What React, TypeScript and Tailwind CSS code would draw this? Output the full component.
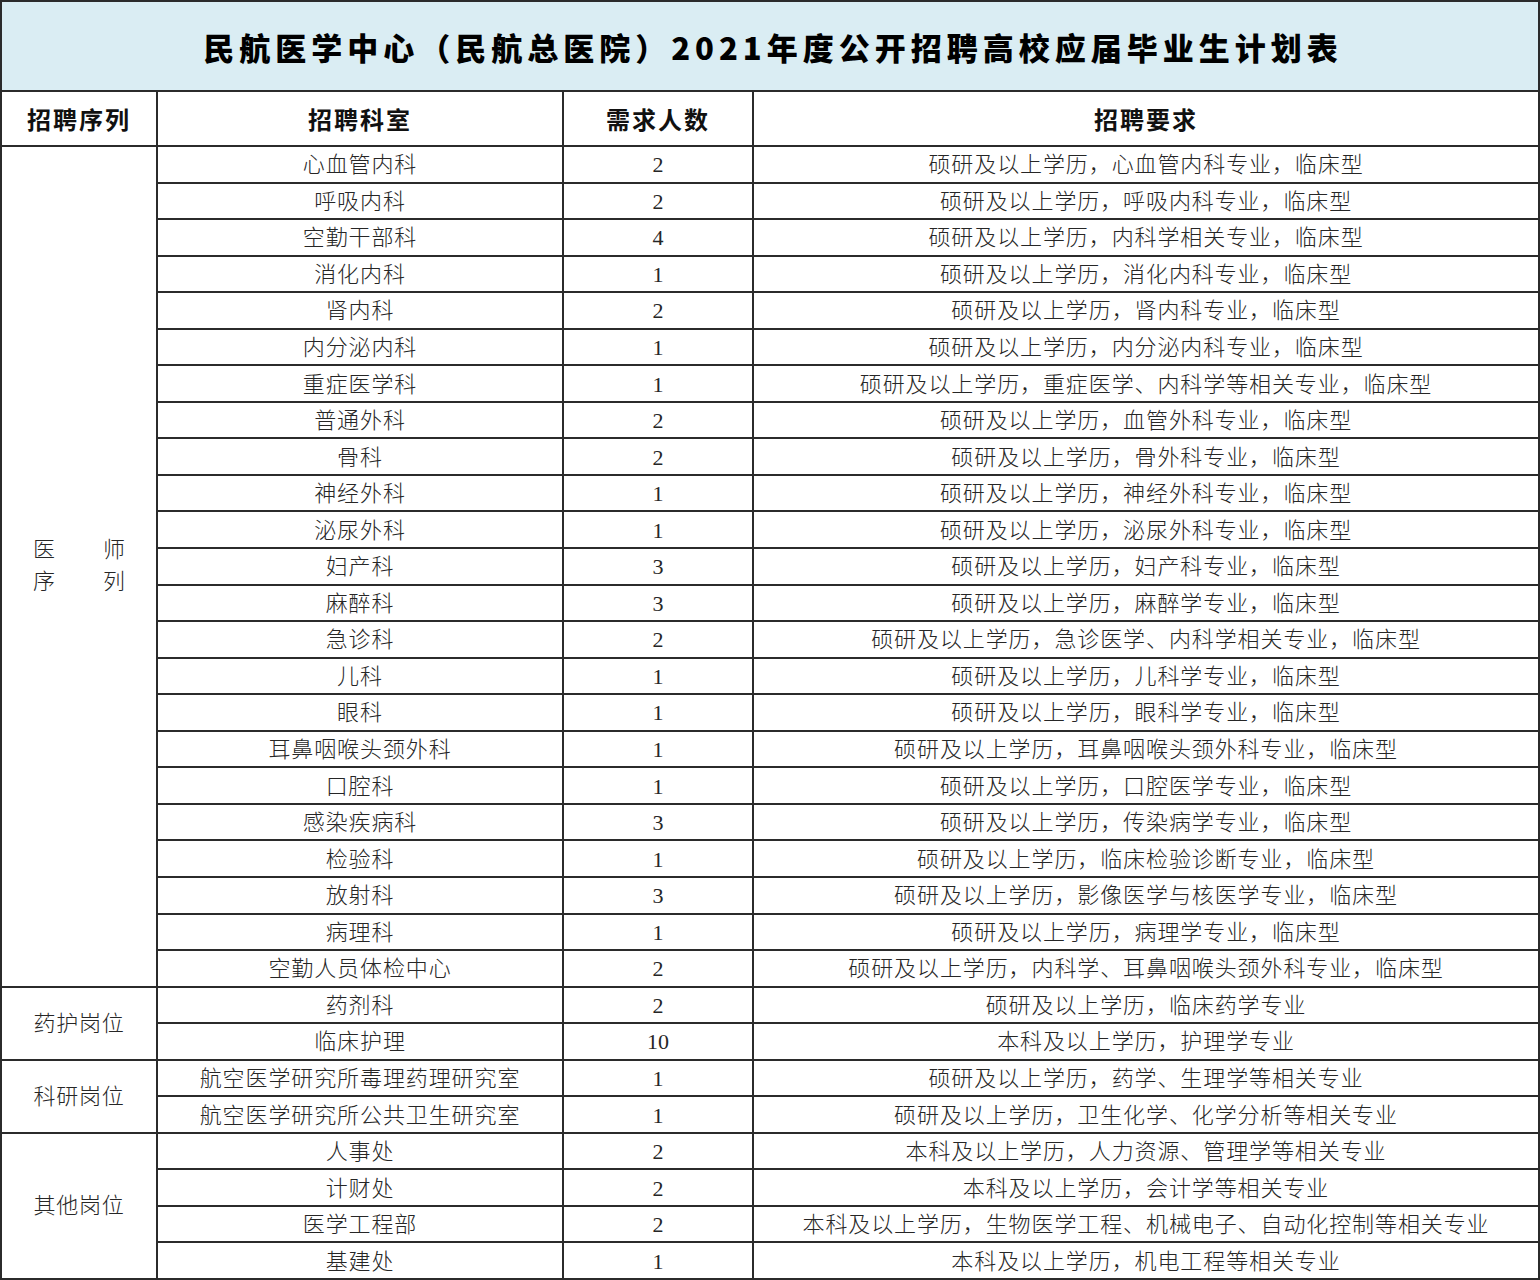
import React from 'react';

type Row = { dept: string; count: string; req: string };
type Group = { name: string; span: string; split?: boolean; rows: Row[] };

const groups: Group[] = [
  {
    name: '医师序列',
    span: 'row-span-23',
    split: true,
    rows: [
      { dept: '心血管内科', count: '2', req: '硕研及以上学历，心血管内科专业，临床型' },
      { dept: '呼吸内科', count: '2', req: '硕研及以上学历，呼吸内科专业，临床型' },
      { dept: '空勤干部科', count: '4', req: '硕研及以上学历，内科学相关专业，临床型' },
      { dept: '消化内科', count: '1', req: '硕研及以上学历，消化内科专业，临床型' },
      { dept: '肾内科', count: '2', req: '硕研及以上学历，肾内科专业，临床型' },
      { dept: '内分泌内科', count: '1', req: '硕研及以上学历，内分泌内科专业，临床型' },
      { dept: '重症医学科', count: '1', req: '硕研及以上学历，重症医学、内科学等相关专业，临床型' },
      { dept: '普通外科', count: '2', req: '硕研及以上学历，血管外科专业，临床型' },
      { dept: '骨科', count: '2', req: '硕研及以上学历，骨外科专业，临床型' },
      { dept: '神经外科', count: '1', req: '硕研及以上学历，神经外科专业，临床型' },
      { dept: '泌尿外科', count: '1', req: '硕研及以上学历，泌尿外科专业，临床型' },
      { dept: '妇产科', count: '3', req: '硕研及以上学历，妇产科专业，临床型' },
      { dept: '麻醉科', count: '3', req: '硕研及以上学历，麻醉学专业，临床型' },
      { dept: '急诊科', count: '2', req: '硕研及以上学历，急诊医学、内科学相关专业，临床型' },
      { dept: '儿科', count: '1', req: '硕研及以上学历，儿科学专业，临床型' },
      { dept: '眼科', count: '1', req: '硕研及以上学历，眼科学专业，临床型' },
      { dept: '耳鼻咽喉头颈外科', count: '1', req: '硕研及以上学历，耳鼻咽喉头颈外科专业，临床型' },
      { dept: '口腔科', count: '1', req: '硕研及以上学历，口腔医学专业，临床型' },
      { dept: '感染疾病科', count: '3', req: '硕研及以上学历，传染病学专业，临床型' },
      { dept: '检验科', count: '1', req: '硕研及以上学历，临床检验诊断专业，临床型' },
      { dept: '放射科', count: '3', req: '硕研及以上学历，影像医学与核医学专业，临床型' },
      { dept: '病理科', count: '1', req: '硕研及以上学历，病理学专业，临床型' },
      { dept: '空勤人员体检中心', count: '2', req: '硕研及以上学历，内科学、耳鼻咽喉头颈外科专业，临床型' },
    ],
  },
  {
    name: '药护岗位',
    span: 'row-span-2',
    rows: [
      { dept: '药剂科', count: '2', req: '硕研及以上学历，临床药学专业' },
      { dept: '临床护理', count: '10', req: '本科及以上学历，护理学专业' },
    ],
  },
  {
    name: '科研岗位',
    span: 'row-span-2',
    rows: [
      { dept: '航空医学研究所毒理药理研究室', count: '1', req: '硕研及以上学历，药学、生理学等相关专业' },
      { dept: '航空医学研究所公共卫生研究室', count: '1', req: '硕研及以上学历，卫生化学、化学分析等相关专业' },
    ],
  },
  {
    name: '其他岗位',
    span: 'row-span-4',
    rows: [
      { dept: '人事处', count: '2', req: '本科及以上学历，人力资源、管理学等相关专业' },
      { dept: '计财处', count: '2', req: '本科及以上学历，会计学等相关专业' },
      { dept: '医学工程部', count: '2', req: '本科及以上学历，生物医学工程、机械电子、自动化控制等相关专业' },
      { dept: '基建处', count: '1', req: '本科及以上学历，机电工程等相关专业' },
    ],
  },
];

const cell = 'bg-white flex items-center justify-center whitespace-nowrap';

export default function App() {
  return (
    <div className="w-[1540px] h-[1280px] bg-white font-['Liberation_Serif','Noto_Sans_CJK_SC',serif] text-[#262626]">
      <div className="w-full h-full border-2 border-[#2b2b2b] bg-[#2b2b2b] grid grid-cols-[154px_404px_188px_1fr] grid-rows-[88px_53px_repeat(31,minmax(0,1fr))] gap-[2px]">
        {/* title */}
        <div className="col-span-4 bg-[#daedf3] flex items-center justify-center pt-[2px]">
          <h1 className="font-['Noto_Sans_CJK_SC',sans-serif] font-black text-[31px] tracking-[5px] text-black pl-[6px]">
            民航医学中心（民航总医院）2021年度公开招聘高校应届毕业生计划表
          </h1>
        </div>

        {/* header */}
        {['招聘序列', '招聘科室', '需求人数', '招聘要求'].map(h => (
          <div
            key={h}
            className={`${cell} font-['Noto_Sans_CJK_SC',sans-serif] font-bold text-[24px] tracking-[2px] text-[#111]`}
          >
            {h}
          </div>
        ))}

        {groups.map(g => (
          <React.Fragment key={g.name}>
            <div className={`${g.span} col-start-1 bg-white flex flex-col items-center justify-center text-[22px] font-light`}>
              {g.split ? (
                <div className="w-full px-[31px] leading-[32px]">
                  <div className="flex justify-between">
                    <span>医</span>
                    <span>师</span>
                  </div>
                  <div className="flex justify-between">
                    <span>序</span>
                    <span>列</span>
                  </div>
                </div>
              ) : (
                <span className="tracking-[0.8px]">{g.name}</span>
              )}
            </div>
            {g.rows.map(r => (
              <React.Fragment key={r.dept}>
                <div className={`${cell} col-start-2 text-[22px] tracking-[0.9px] font-light pt-[1px]`}>{r.dept}</div>
                <div className={`${cell} text-[22px] pt-[1px]`}>{r.count}</div>
                <div className={`${cell} text-[22px] tracking-[0.9px] font-light pt-[1px]`}>{r.req}</div>
              </React.Fragment>
            ))}
          </React.Fragment>
        ))}
      </div>
    </div>
  );
}
